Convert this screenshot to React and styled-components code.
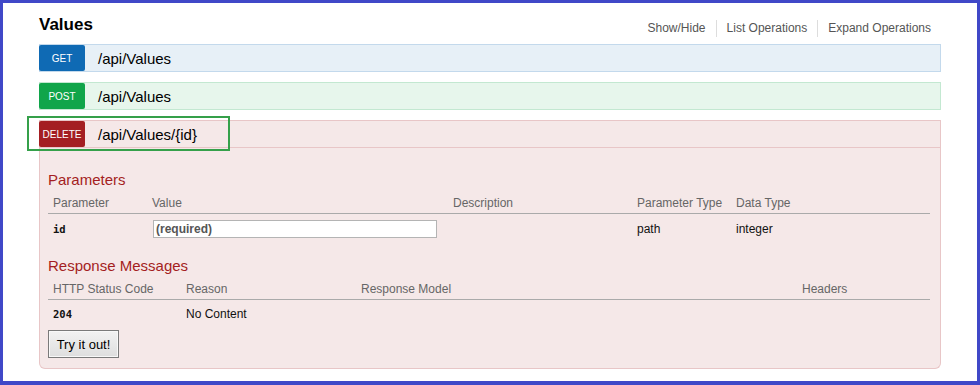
import styled, { createGlobalStyle } from "styled-components";

const GlobalStyle = createGlobalStyle`
  html, body {
    margin: 0;
    padding: 0;
    background: #ffffff;
  }
  body {
    font-family: "Liberation Sans", Arial, sans-serif;
  }
`;

const methods = {
  get: { badge: "#0f6ab4", bg: "#e7f0f7", border: "#c3d9ec" },
  post: { badge: "#10a54a", bg: "#e7f6ec", border: "#c3e8d1" },
  delete: { badge: "#a41e22", bg: "#f5e8e8", border: "#e8c6c7" },
};

const Frame = styled.div`
  box-sizing: border-box;
  width: 980px;
  height: 385px;
  border: 3px solid #4048c8;
  border-bottom-width: 4px;
  padding: 0 36px;
  background: #ffffff;
  overflow: hidden;
`;

const ResourceHeader = styled.div`
  display: flex;
  align-items: flex-end;
  justify-content: space-between;
  height: 41px;
`;

const Title = styled.h2`
  margin: 0 0 9px 0;
  font-size: 17px;
  line-height: 20px;
  font-weight: bold;
  color: #000;
`;

const Options = styled.ul`
  display: flex;
  margin: 0 0 7px 0;
  padding: 0;
  list-style: none;
`;

const OptionLink = styled.li`
  padding: 0 10px;
  font-size: 12px;
  line-height: 17px;
  color: #555;
  border-left: ${({ $first }) => ($first ? "none" : "1px solid #dddddd")};
`;

const Operations = styled.ul`
  margin: 0;
  padding: 0;
  list-style: none;
`;

const Operation = styled.li`
  margin-bottom: 10px;
`;

const Heading = styled.div`
  position: relative;
  box-sizing: border-box;
  display: flex;
  align-items: center;
  height: 28px;
  background: ${({ $method }) => methods[$method].bg};
  border: 1px solid ${({ $method }) => methods[$method].border};
`;

const MethodBadge = styled.span`
  display: flex;
  align-items: center;
  justify-content: center;
  width: 46px;
  height: 26px;
  margin-left: -1px;
  border-radius: 2px;
  background: ${({ $method }) => methods[$method].badge};
  color: #ffffff;
  font-size: 10px;
  text-transform: uppercase;
`;

const PathText = styled.span`
  padding-left: 13px;
  font-size: 15px;
  color: #000;
`;

const Highlight = styled.span`
  position: absolute;
  left: -13px;
  top: -5px;
  box-sizing: border-box;
  width: 203px;
  height: 35px;
  border: 2px solid #35a04a;
  pointer-events: none;
`;

const Content = styled.div`
  box-sizing: border-box;
  padding: 23px 10px 10px 8px;
  background: #f5e8e8;
  border: 1px solid #e8c6c7;
  border-top: none;
  border-radius: 0 0 6px 6px;
`;

const SectionTitle = styled.h4`
  margin: ${({ $spaced }) => ($spaced ? "13px" : "0")} 0 4px 0;
  font-size: 15px;
  line-height: 18px;
  font-weight: normal;
  color: #a41e22;
`;

const Grid = styled.div`
  display: grid;
  grid-template-columns: ${({ $cols }) => $cols};
  align-items: center;
`;

const HeadCell = styled.div`
  padding: 3px 5px 2px;
  font-size: 12px;
  line-height: 15px;
  color: #666;
  border-bottom: 1px solid #aaaaaa;
  white-space: nowrap;
`;

const Cell = styled.div`
  padding: ${({ $pad }) => $pad || "6px 5px"};
  font-size: 12px;
  line-height: 15px;
  color: #111;
`;

const CodeCell = styled(Cell)`
  font-family: "DejaVu Sans Mono", "Liberation Mono", monospace;
  font-size: 10.5px;
  font-weight: bold;
`;

const ValueInput = styled.input`
  box-sizing: border-box;
  display: block;
  width: 284px;
  height: 18px;
  margin-left: 1px;
  padding: 0 2px;
  border: 1px solid #b4b4b4;
  background: #ffffff;
  font-family: "Liberation Sans", Arial, sans-serif;
  font-size: 12px;
  font-weight: bold;
  color: #555;
  &::placeholder {
    color: #555;
  }
`;

const TryButton = styled.button`
  display: block;
  box-sizing: border-box;
  width: 71px;
  height: 28px;
  margin-top: 4px;
  padding: 0;
  border: 1px solid #7a7a7a;
  box-shadow: inset 0 0 0 1px #f8f8f8;
  background: linear-gradient(#f2f2f2, #dedede);
  font-family: "Liberation Sans", Arial, sans-serif;
  font-size: 13px;
  color: #000;
`;

const paramCols = "99px 301px 184px 99px 199px";
const responseCols = "133px 175px 441px 133px";

function OperationRow({ method, path, highlighted, children }) {
  return (
    <Operation>
      <Heading $method={method}>
        <MethodBadge $method={method}>{method}</MethodBadge>
        <PathText>{path}</PathText>
        {highlighted && <Highlight />}
      </Heading>
      {children}
    </Operation>
  );
}

export default function App() {
  return (
    <>
      <GlobalStyle />
      <Frame>
        <ResourceHeader>
          <Title>Values</Title>
          <Options>
            <OptionLink $first>Show/Hide</OptionLink>
            <OptionLink>List Operations</OptionLink>
            <OptionLink>Expand Operations</OptionLink>
          </Options>
        </ResourceHeader>
        <Operations>
          <OperationRow method="get" path="/api/Values" />
          <OperationRow method="post" path="/api/Values" />
          <OperationRow method="delete" path="/api/Values/{id}" highlighted>
            <Content>
              <SectionTitle>Parameters</SectionTitle>
              <Grid $cols={paramCols}>
                <HeadCell>Parameter</HeadCell>
                <HeadCell>Value</HeadCell>
                <HeadCell>Description</HeadCell>
                <HeadCell>Parameter Type</HeadCell>
                <HeadCell>Data Type</HeadCell>
                <CodeCell>id</CodeCell>
                <Cell>
                  <ValueInput placeholder="(required)" />
                </Cell>
                <Cell />
                <Cell>path</Cell>
                <Cell>integer</Cell>
              </Grid>
              <SectionTitle $spaced>Response Messages</SectionTitle>
              <Grid $cols={responseCols}>
                <HeadCell>HTTP Status Code</HeadCell>
                <HeadCell>Reason</HeadCell>
                <HeadCell>Response Model</HeadCell>
                <HeadCell>Headers</HeadCell>
                <CodeCell $pad="7px 5px 4px">204</CodeCell>
                <Cell $pad="7px 5px 4px">No Content</Cell>
                <Cell $pad="7px 5px 4px" />
                <Cell $pad="7px 5px 4px" />
              </Grid>
              <TryButton>Try it out!</TryButton>
            </Content>
          </OperationRow>
        </Operations>
      </Frame>
    </>
  );
}
